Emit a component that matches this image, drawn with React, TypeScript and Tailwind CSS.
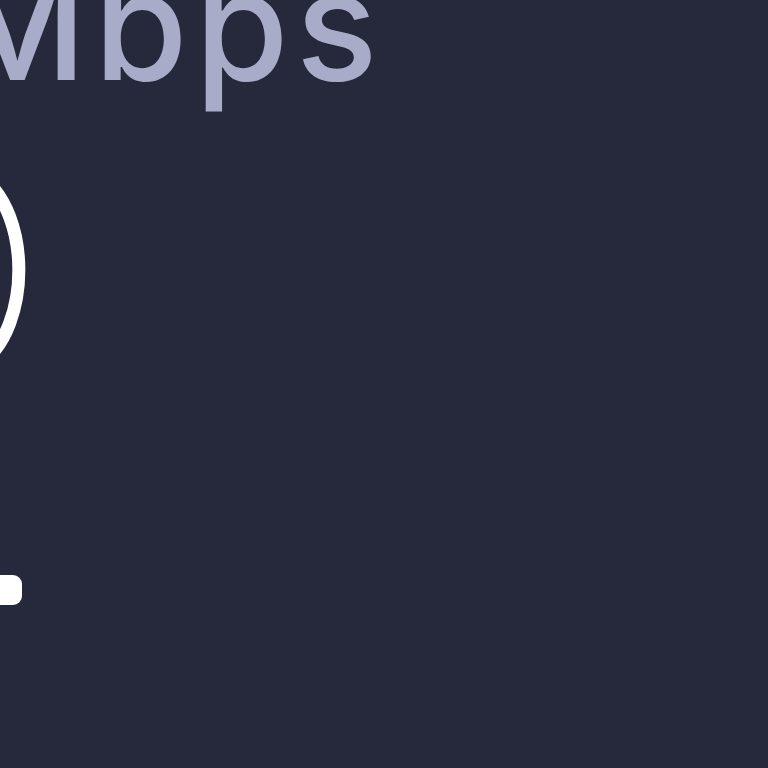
import React from 'react'

export default function App() {
  return (
    <div className="w-[768px] h-[768px] bg-[#26283b] overflow-hidden flex flex-col">
      {/* Speed unit label, cropped at the top-left */}
      <div className="h-[130px] shrink-0">
        <div
          className="mt-[-51px] ml-[-52px] text-[152px] leading-none font-medium text-[#a9acc8] tracking-[7px] whitespace-nowrap"
          style={{ fontFamily: 'Inter, "Open Sans", sans-serif' }}
        >
          Mbps
        </div>
      </div>

      {/* Part of the gauge drawing peeking from the left edge */}
      <svg width="80" height="490" viewBox="0 0 80 490" className="shrink-0" fill="none">
        <path
          d="M -15 50 A 60 100 0 0 1 -15 230"
          stroke="#ffffff"
          strokeWidth="13"
          strokeLinecap="round"
        />
        <rect x="-20" y="445" width="42" height="30" rx="9" fill="#ffffff" />
      </svg>
    </div>
  )
}
